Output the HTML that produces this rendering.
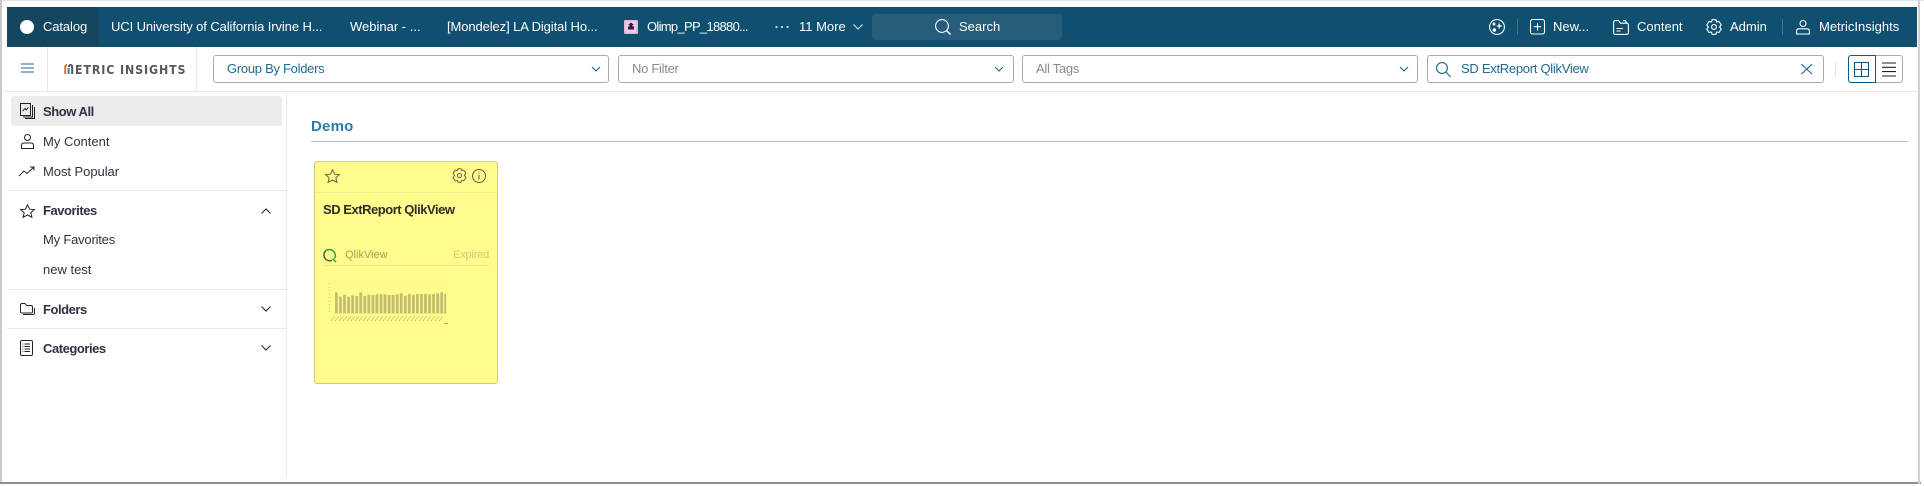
<!DOCTYPE html>
<html><head><meta charset="utf-8"><style>
*{box-sizing:border-box}
html,body{margin:0;padding:0;width:1924px;height:486px;overflow:hidden;background:#fff;font-family:"Liberation Sans",sans-serif;font-size:13px;color:#33363f}
.a{position:absolute;white-space:nowrap}
.t{color:#fff;line-height:16px;top:19px;font-size:13px}
.dd{position:absolute;top:55px;height:28px;border:1px solid #aaa;border-radius:3px;background:#fff;line-height:26px;padding-left:13px;font-size:13px;letter-spacing:-.28px}
.s{position:absolute;height:1px;background:#e9e9e9}
.m{position:absolute;left:43px;line-height:16px;font-size:13px;color:#2f3140}
.b{font-weight:bold;letter-spacing:-.45px}
svg{position:absolute;overflow:visible;fill:none}
</style></head><body>
<div class="a" style="left:0;top:0;width:1924px;height:1px;background:#e4e4e4"></div>
<div class="a" style="left:0;top:0;width:2px;height:484px;background:#c9c9c9"></div>
<div class="a" style="left:0;top:482px;width:1921px;height:2px;background:#8f8f8f"></div>
<div class="a" style="left:1918px;top:0;width:2px;height:484px;background:#d0d0d0"></div>

<!-- topbar -->
<div class="a" style="left:7px;top:7px;width:1910px;height:40px;background:#0f4f70"></div>
<div class="a" style="left:7px;top:7px;width:92px;height:40px;background:#14465f"></div>
<div class="a" style="left:20px;top:20px;width:14px;height:14px;border-radius:50%;background:#fff"></div>
<div class="a t" style="left:43px;letter-spacing:-.1px">Catalog</div>
<div class="a t" style="left:111px;letter-spacing:-.1px">UCI University of California Irvine H...</div>
<div class="a t" style="left:350px">Webinar - ...</div>
<div class="a t" style="left:447px;letter-spacing:-.1px">[Mondelez] LA Digital Ho...</div>
<svg style="left:624px;top:20px" width="14" height="14"><rect width="14" height="14" rx="1" fill="#e3b6dc"/><rect x="2" y="1.5" width="10" height="11" fill="#e9cfe6"/><path d="M7 2.5 L10 5 H8.5 V6.5 H10 V9.5 H4 V6.5 H5.5 V5 H4 Z" fill="#3d1444"/></svg>
<div class="a t" style="left:647px;letter-spacing:-.7px">Olimp_PP_18880...</div>
<svg style="left:775px;top:25px" width="14" height="4"><circle cx="1.5" cy="2" r="1.1" fill="#cfdde6"/><circle cx="7" cy="2" r="1.1" fill="#cfdde6"/><circle cx="12.5" cy="2" r="1.1" fill="#cfdde6"/></svg>
<div class="a t" style="left:799px">11 More</div>
<svg style="left:853px;top:24px" width="10" height="6" stroke="#dce7ee" stroke-width="1.1"><path d="M.5 .5 L5 5 L9.5 .5"/></svg>
<div class="a" style="left:872px;top:14px;width:190px;height:26px;border-radius:3px;background:#255d7a"></div>
<svg style="left:935px;top:19px" width="16" height="16" stroke="#fff" stroke-width="1.1"><circle cx="7" cy="7" r="6.4"/><path d="M11.5 11.5 L15.5 15.5" stroke-width="1.5"/></svg>
<div class="a t" style="left:959px">Search</div>

<svg style="left:1489px;top:19px" width="16" height="16" stroke="#fff" stroke-width="1.1"><circle cx="8" cy="8" r="7.4"/><path d="M10.3 4.5 V9.5 M7.8 7 H12.8" stroke-width="1.3"/><circle cx="5" cy="5" r=".9" fill="#fff"/><circle cx="5.3" cy="11" r="1.2" fill="#fff"/></svg>
<div class="a" style="left:1517px;top:19px;width:1px;height:16px;background:#3f7490"></div>
<svg style="left:1530px;top:19px" width="15" height="15" stroke="#fff" stroke-width="1.1"><rect x=".5" y=".5" width="14" height="14.5" rx="2"/><path d="M7.5 4 V11.5 M3.8 7.7 H11.2"/></svg>
<div class="a t" style="left:1553px">New...</div>
<svg style="left:1613px;top:20px" width="16" height="15" stroke="#fff" stroke-width="1.1"><path d="M.6 2.5 Q.6 .6 2.5 .6 H5.5 L7.5 3.2 H13.5 Q15.4 3.2 15.4 5 V12.5 Q15.4 14.4 13.5 14.4 H2.5 Q.6 14.4 .6 12.5 Z M10 .6 H12 L14 3 M3.5 8.5 H10 M3.5 11 H7.5"/></svg>
<div class="a t" style="left:1637px">Content</div>
<svg style="left:1706px;top:19px" width="16" height="16" stroke="#fff" stroke-width="1.1"><path d="M6.2 .7 H9.8 L10.7 3 L13 2.5 L15.2 5.8 L13.6 8 L15.2 10.2 L13 13.5 L10.7 13 L9.8 15.3 H6.2 L5.3 13 L3 13.5 L.8 10.2 L2.4 8 L.8 5.8 L3 2.5 L5.3 3 Z"/><circle cx="8" cy="8" r="2.4"/></svg>
<div class="a t" style="left:1730px">Admin</div>
<div class="a" style="left:1782px;top:19px;width:1px;height:16px;background:#3f7490"></div>
<svg style="left:1796px;top:20px" width="14" height="14" stroke="#fff" stroke-width="1.1"><circle cx="7" cy="3.5" r="3"/><path d="M.6 14 V11 Q.6 8.8 3 8.8 H11 Q13.4 8.8 13.4 11 V14 Z"/></svg>
<div class="a t" style="left:1819px">MetricInsights</div>

<!-- toolbar -->
<svg style="left:20.5px;top:63px" width="13" height="10" stroke="#1c6a8f" stroke-width="1.1"><path d="M0 1 H13 M0 5 H13 M0 9 H13"/></svg>
<div class="a" style="left:47px;top:47px;width:1px;height:44px;background:#e9e9e9"></div>
<div class="a" style="left:196px;top:47px;width:1px;height:44px;background:#e9e9e9"></div>
<svg style="left:64px;top:64px" width="10" height="10" stroke-width="2"><path d="M1.2 10 V4 Q1.2 1 3.2 1" stroke="#d8713a"/><path d="M4.6 10 V4" stroke="#2a86a8"/><path d="M4.6 3 Q5 1 7 1 Q8.2 1 8.2 4 V10" stroke="#555a60"/></svg>
<div class="a" style="left:75px;top:62px;font:bold 12.5px 'DejaVu Sans',sans-serif;letter-spacing:1px;color:#555a60;line-height:15px;transform-origin:left;transform:scaleX(.885)">ETRIC INSIGHTS</div>
<div class="s" style="left:4px;top:91px;width:1914px"></div>

<div class="dd" style="left:213px;width:396px;color:#1d6a8f">Group By Folders</div>
<svg style="left:591px;top:66px" width="10" height="7" stroke="#1d5f80" stroke-width="1.1"><path d="M1 1 L5 5 L9 1"/></svg>
<div class="dd" style="left:618px;width:396px;color:#8a8a8a">No Filter</div>
<svg style="left:994px;top:66px" width="10" height="7" stroke="#1d5f80" stroke-width="1.1"><path d="M1 1 L5 5 L9 1"/></svg>
<div class="dd" style="left:1022px;width:396px;color:#8a8a8a">All Tags</div>
<svg style="left:1399px;top:66px" width="10" height="7" stroke="#1d5f80" stroke-width="1.1"><path d="M1 1 L5 5 L9 1"/></svg>
<div class="dd" style="left:1427px;width:397px;padding-left:33px;color:#1d6a8f">SD ExtReport QlikView</div>
<svg style="left:1436px;top:62px" width="15" height="15" stroke="#1d6a8f" stroke-width="1.1"><circle cx="6" cy="6" r="5.4"/><path d="M10 10 L14.5 15"/></svg>
<svg style="left:1800.5px;top:64px" width="11" height="10" stroke="#1d6a8f" stroke-width="1.1"><path d="M.5 .2 L11 10 M11 .2 L.5 10"/></svg>
<div class="a" style="left:1835px;top:62px;width:1px;height:15px;background:#e4e4e4"></div>
<div class="a" style="left:1875px;top:55px;width:28px;height:28px;border:1px solid #aaa;border-radius:0 3px 3px 0"></div>
<div class="a" style="left:1848px;top:55px;width:28px;height:28px;border:1px solid #0f5a80;border-radius:3px 0 0 3px;background:#fff"></div>
<svg style="left:1854px;top:62px" width="15" height="15" stroke="#0f5a80" stroke-width="1.1"><rect x=".5" y=".5" width="14" height="14"/><path d="M7.5 .5 V14.5 M.5 7.5 H14.5"/></svg>
<svg style="left:1882px;top:62px" width="14" height="14" stroke="#222" stroke-width="1.1"><path d="M0 1 H14 M0 5.3 H14 M0 9.6 H14 M0 14 H14"/></svg>

<!-- sidebar -->
<div class="a" style="left:286px;top:91px;width:1px;height:386px;background:#e9e9e9"></div>
<div class="a" style="left:11px;top:96px;width:271px;height:30px;border-radius:3px;background:#ececec"></div>
<svg style="left:20px;top:103px" width="15" height="16" stroke="#222" stroke-width="1"><rect x=".5" y=".5" width="10" height="12"/><path d="M12.5 2 V14 H3 M14.5 4 V15.5 H5 M2.5 8 L5 5.5 L6 7 L8.5 4.5"/></svg>
<div class="m b" style="top:104px">Show All</div>
<svg style="left:21px;top:134px" width="13" height="15" stroke="#222" stroke-width="1"><circle cx="6.5" cy="3.5" r="3"/><path d="M.5 14.5 V11.5 Q.5 9 3 9 H10 Q12.5 9 12.5 11.5 V14.5 Z"/></svg>
<div class="m" style="top:134px">My Content</div>
<svg style="left:19px;top:166px" width="16" height="11" stroke="#222" stroke-width="1"><path d="M0 10 L5 5 L8 7.5 L15 1 M11 1 H15 V4.5"/></svg>
<div class="m" style="top:164px;letter-spacing:-.05px">Most Popular</div>
<div class="s" style="left:7px;top:190px;width:279px"></div>
<svg style="left:20px;top:204px" width="15" height="14" stroke="#222" stroke-width="1"><path d="M7.5 .8 L9.6 5.2 L14.4 5.6 L10.8 8.8 L11.9 13.3 L7.5 11 L3.1 13.3 L4.2 8.8 L.6 5.6 L5.4 5.2 Z"/></svg>
<div class="m b" style="top:203px">Favorites</div>
<svg style="left:261px;top:208px" width="10" height="6" stroke="#222" stroke-width="1"><path d="M.5 5.5 L5 1 L9.5 5.5"/></svg>
<div class="m" style="top:232px;letter-spacing:-.2px">My Favorites</div>
<div class="m" style="top:262px">new test</div>
<div class="s" style="left:7px;top:289px;width:279px"></div>
<svg style="left:20px;top:303px" width="15" height="12" stroke="#222" stroke-width="1"><path d="M.5 9 V2 Q.5 .5 2 .5 H5 L6.5 2.5 H11 Q12.5 2.5 12.5 4 V9 Q12.5 10 11 10 H2 Q.5 10 .5 9 Z M14.5 5 V10 Q14.5 11.5 13 11.5 H3"/></svg>
<div class="m b" style="top:302px">Folders</div>
<svg style="left:261px;top:306px" width="10" height="6" stroke="#222" stroke-width="1"><path d="M.5 .5 L5 5 L9.5 .5"/></svg>
<div class="s" style="left:7px;top:328px;width:279px"></div>
<svg style="left:20px;top:340px" width="13" height="16" stroke="#222" stroke-width="1"><rect x=".5" y=".5" width="12" height="15" rx="1.5"/><path d="M4.5 4 H10 M4.5 6.5 H10 M4.5 9 H10 M4.5 11.5 H10 M2.5 4 H3.3 M2.5 6.5 H3.3 M2.5 9 H3.3 M2.5 11.5 H3.3"/></svg>
<div class="m b" style="top:341px">Categories</div>
<svg style="left:261px;top:345px" width="10" height="6" stroke="#222" stroke-width="1"><path d="M.5 .5 L5 5 L9.5 .5"/></svg>

<!-- content -->
<div class="a" style="left:311px;top:119px;font-size:15px;font-weight:bold;letter-spacing:.2px;line-height:16px;color:#2f7ba5">Demo</div>
<div class="a" style="left:311px;top:141px;width:1597px;height:1px;background:#a9c4d4"></div>

<div class="a" style="left:314px;top:161px;width:184px;height:223px;background:#fffb8c;border:1px solid #cfcb6c;border-top-color:#d3d08a;border-radius:3px"></div>
<div class="a" style="left:315px;top:192px;width:182px;height:1px;background:#eee988"></div>
<svg style="left:325px;top:168.5px" width="15" height="14" stroke="#63623c" stroke-width="1"><path d="M7.5 .8 L9.6 5.2 L14.4 5.6 L10.8 8.8 L11.9 13.3 L7.5 11 L3.1 13.3 L4.2 8.8 L.6 5.6 L5.4 5.2 Z"/></svg>
<svg style="left:452px;top:168px" width="15" height="15" stroke="#63623c" stroke-width="1"><path d="M6 .7 H9 L9.7 2.7 L11.8 2.2 L13.9 5.1 L12.5 7.5 L13.9 9.9 L11.8 12.8 L9.7 12.3 L9 14.3 H6 L5.3 12.3 L3.2 12.8 L1.1 9.9 L2.5 7.5 L1.1 5.1 L3.2 2.2 L5.3 2.7 Z"/><circle cx="7.5" cy="7.5" r="2.1"/></svg>
<svg style="left:472px;top:168.5px" width="14" height="14" stroke="#63623c" stroke-width="1"><circle cx="7" cy="7" r="6.5"/><path d="M7 6 V10.5 M7 3.4 V4.6"/></svg>
<div class="a" style="left:323px;top:202px;font-size:13px;font-weight:bold;letter-spacing:-.47px;line-height:16px;color:#2e2e24">SD ExtReport QlikView</div>
<svg style="left:323px;top:248px" width="14" height="15" stroke-width="1.4"><path d="M3 11.5 A6 6 0 0 1 3 2.5" stroke="#2f5f3d"/><path d="M3 2.5 A6 6 0 0 1 11.5 10.5" stroke="#17a34a"/><path d="M3 11.5 A6 6 0 0 0 9 12.4" stroke="#2f5f3d"/><path d="M9.5 10.5 L13 14" stroke="#17a34a"/></svg>
<div class="a" style="left:345px;top:248px;font-size:11px;line-height:14px;color:#a5a25c">QlikView</div>
<div class="a" style="right:1435px;top:248px;font-size:11px;letter-spacing:-.2px;line-height:14px;color:#cfcc7a">Expired</div>
<div class="a" style="left:323px;top:265px;width:166px;height:1px;background:#eee988"></div>

<svg style="left:328px;top:280px" width="122" height="50" viewBox="328 280 122 50">
<path d="M333 283 H446 M333 313.5 H446" stroke="#f1ed80" stroke-width=".7"/>
<path d="M329.5 283 V314" stroke="#cbc878" stroke-width="1.2" stroke-dasharray="1 2.5"/>
<g fill="#c2be70">
<rect x="335" y="292.3" width="2.8" height="21"/><rect x="339.1" y="296.7" width="2.8" height="16.6"/><rect x="343.1" y="294.7" width="2.8" height="18.6"/><rect x="347.2" y="296.7" width="2.8" height="16.6"/><rect x="351.2" y="295.3" width="2.8" height="18"/><rect x="355.3" y="296" width="2.8" height="17.3"/><rect x="359.3" y="292.3" width="2.8" height="21"/><rect x="363.4" y="296" width="2.8" height="17.3"/><rect x="367.4" y="294.7" width="2.8" height="18.6"/><rect x="371.5" y="295" width="2.8" height="18.3"/><rect x="375.5" y="294.3" width="2.8" height="19"/><rect x="379.6" y="294.3" width="2.8" height="19"/><rect x="383.6" y="294.3" width="2.8" height="19"/><rect x="387.7" y="295" width="2.8" height="18.3"/><rect x="391.7" y="295" width="2.8" height="18.3"/><rect x="395.8" y="294.3" width="2.8" height="19"/><rect x="399.8" y="293.3" width="2.8" height="20"/><rect x="403.9" y="295.7" width="2.8" height="17.6"/><rect x="407.9" y="294" width="2.8" height="19.3"/><rect x="412" y="294.7" width="2.8" height="18.6"/><rect x="416" y="294" width="2.8" height="19.3"/><rect x="420.1" y="294" width="2.8" height="19.3"/><rect x="424.1" y="294" width="2.8" height="19.3"/><rect x="428.2" y="294.3" width="2.8" height="19"/><rect x="432.2" y="294" width="2.8" height="19.3"/><rect x="436.3" y="293.3" width="2.8" height="20"/><rect x="440.3" y="292.3" width="2.8" height="21"/><rect x="444.3" y="294" width="1.8" height="19.3"/>
</g>
<path d="M331 321 L335 316 M335 321 L339 316 M339 321 L343 316 M343 321 L347 316 M347 321 L351 316 M351 321 L355 316 M355 321 L359 316 M359 321 L363 316 M363 321 L367 316 M367 321 L371 316 M371 321 L375 316 M375 321 L379 316 M379 321 L383 316 M383 321 L387 316 M387 321 L391 316 M391 321 L395 316 M395 321 L399 316 M399 321 L403 316 M403 321 L407 316 M407 321 L411 316 M411 321 L415 316 M415 321 L419 316 M419 321 L423 316 M423 321 L427 316 M427 321 L431 316 M431 321 L435 316 M435 321 L439 316 M439 321 L443 316" stroke="#cdc976" stroke-width=".9"/>
<path d="M444 323.5 H448" stroke="#b0ad62" stroke-width="1"/>
</svg>
</body></html>
